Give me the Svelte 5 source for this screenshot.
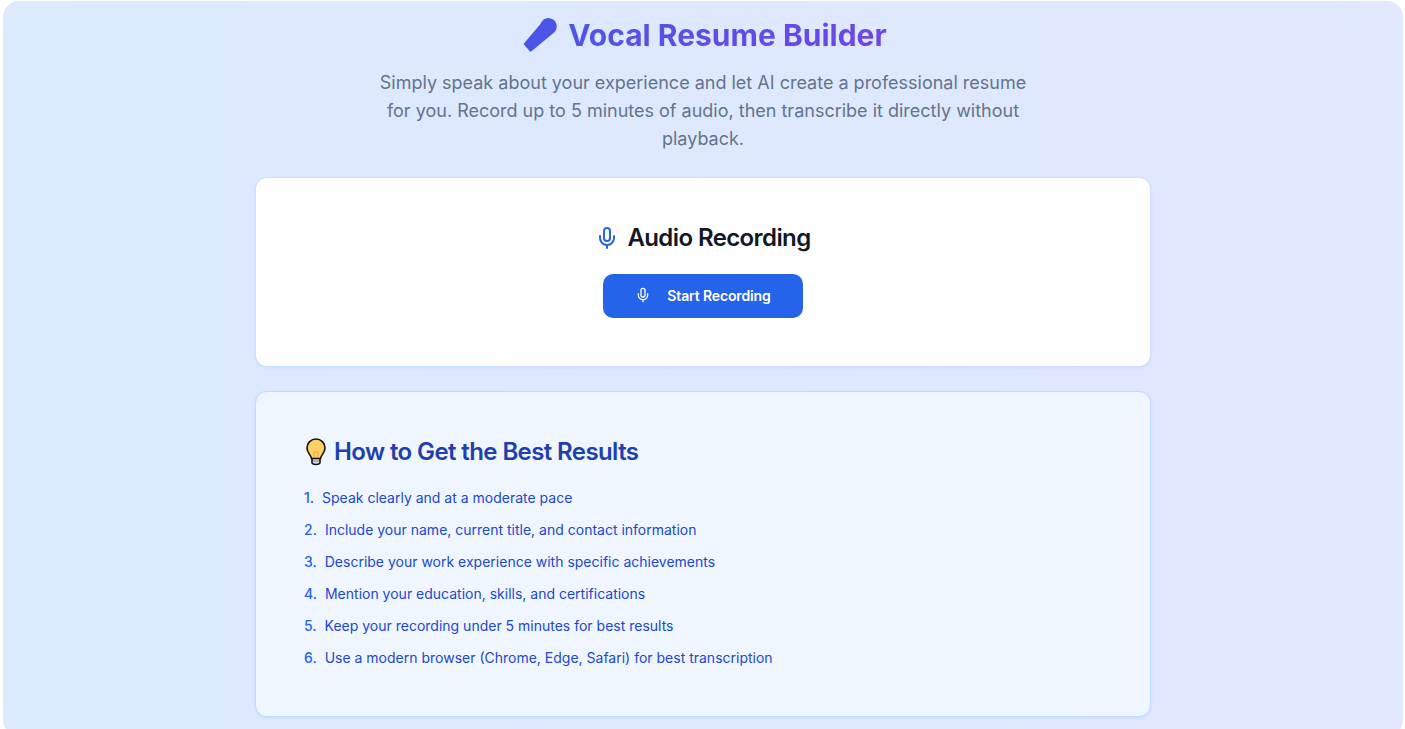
<script lang="ts">
    const tips = [
        "Speak clearly and at a moderate pace",
        "Include your name, current title, and contact information",
        "Describe your work experience with specific achievements",
        "Mention your education, skills, and certifications",
        "Keep your recording under 5 minutes for best results",
        "Use a modern browser (Chrome, Edge, Safari) for best transcription",
    ];
</script>

<div class="page">
    <main class="panel">
        <header class="header">
            <h1>
                <svg class="logo" width="38" height="38" viewBox="0 0 38 38" aria-hidden="true">
                    <path
                        fill="#4b55e8"
                        d="M4.500 28 L21.500 8 A8.300 8.300 0 1 1 34.500 17 L11.500 36 Z"
                    />
                </svg>
                <span class="title">Vocal Resume Builder</span>
            </h1>
            <p>
                Simply speak about your experience and let AI create a professional resume for you. Record up to 5
                minutes of audio, then transcribe it directly without playback.
            </p>
        </header>

        <section class="card recorder">
            <h2>
                <svg class="mic blue" width="24" height="24" viewBox="0 0 24 24" aria-hidden="true">
                    <path d="M12 2a3 3 0 0 0-3 3v7a3 3 0 0 0 6 0V5a3 3 0 0 0-3-3Z" />
                    <path d="M19 10v2a7 7 0 0 1-14 0v-2" />
                    <line x1="12" x2="12" y1="19" y2="22" />
                </svg>
                Audio Recording
            </h2>
            <button type="button">
                <svg class="mic" width="16" height="16" viewBox="0 0 24 24" aria-hidden="true">
                    <path d="M12 2a3 3 0 0 0-3 3v7a3 3 0 0 0 6 0V5a3 3 0 0 0-3-3Z" />
                    <path d="M19 10v2a7 7 0 0 1-14 0v-2" />
                    <line x1="12" x2="12" y1="19" y2="22" />
                </svg>
                Start Recording
            </button>
        </section>

        <section class="card tips">
            <h3>
                <svg class="bulb" width="24" height="28" viewBox="0 0 24 28" aria-hidden="true">
                    <path
                        d="M12 1 C7 1 3 5 3 10 C3 14 5.800 16 7.200 19.500 L7.700 21 L16.300 21 L16.800 19.500 C18.200 16 21 14 21 10 C21 5 17 1 12 1 Z"
                        fill="#fdd067"
                        stroke="#111"
                        stroke-width="1.600"
                    />
                    <path d="M9.500 14 L10.500 20.500 M14.500 14 L13.500 20.500 M9.500 14 L14.500 14" fill="none" stroke="#f4a93c" stroke-width="1" />
                    <path d="M8 20.500 L16 20.500 L16 25 C15 27 9 27 8 25 Z" fill="#d8d8d8" stroke="#111" stroke-width="1.600" />
                    <path d="M9 23 L15 23" fill="none" stroke="#8a8a8a" stroke-width="1" />
                </svg>
                How to Get the Best Results
            </h3>
            <ol>
                {#each tips as tip}
                    <li>{tip}</li>
                {/each}
            </ol>
        </section>
    </main>
</div>

<style>
    :global(body) {
        background: #ffffff;
        font-family: Inter, "Noto Sans", sans-serif;
    }

    .page {
        height: 729px;
        padding: 1px 2px 0 3px;
        box-sizing: border-box;
        overflow: hidden;
    }

    .panel {
        height: 735px;
        box-sizing: border-box;
        border-radius: 16px;
        background: linear-gradient(90deg, #dbeafe, #e0e7ff);
        padding-top: 16px;
        display: flex;
        flex-direction: column;
        align-items: center;
    }

    .header {
        text-align: center;
        margin-bottom: 24px;
    }

    h1 {
        margin: 0 0 16px;
        display: flex;
        align-items: center;
        justify-content: center;
        gap: 11px;
        font-size: 30px;
        line-height: 36px;
        font-weight: 700;
    }

    .logo {
        flex: none;
        margin-block: -1px;
    }

    .title {
        background: linear-gradient(90deg, #4f54e8, #6f46e6);
        background-clip: text;
        -webkit-background-clip: text;
        color: transparent;
    }

    .header p {
        margin: 0 auto;
        width: 672px;
        font-size: 18px;
        line-height: 28px;
        color: #64748b;
    }

    .card {
        width: 896px;
        box-sizing: border-box;
        border-radius: 12px;
        flex: none;
    }

    .recorder {
        background: #ffffff;
        background-clip: padding-box;
        border: 1px solid rgba(191, 219, 254, 0.25);
        box-shadow: 0 1px 3px rgba(59, 130, 246, 0.1);
        padding: 48px;
        margin-bottom: 24px;
        display: flex;
        flex-direction: column;
        align-items: center;
        gap: 24px;
    }

    h2 {
        margin: 0;
        display: flex;
        align-items: center;
        gap: 8px;
        font-size: 24px;
        line-height: 24px;
        font-weight: 600;
        letter-spacing: -0.6px;
        color: #111827;
    }

    .mic {
        fill: none;
        stroke: currentColor;
        stroke-width: 2;
        stroke-linecap: round;
        stroke-linejoin: round;
    }

    .blue {
        color: #2563eb;
    }

    button {
        width: 200px;
        height: 44px;
        padding: 0 0 2px;
        display: flex;
        align-items: center;
        justify-content: center;
        gap: 16px;
        border: none;
        border-radius: 10px;
        background: #2563eb;
        color: #ffffff;
        font-family: inherit;
        font-size: 14px;
        font-weight: 600;
        letter-spacing: -0.13px;
        cursor: pointer;
    }

    .tips {
        background: #eff6ff;
        border: 1px solid #bfdbfe;
        box-shadow: 0 1px 3px rgba(59, 130, 246, 0.14);
        padding: 48px;
    }

    h3 {
        margin: 0 0 24px;
        display: flex;
        align-items: center;
        gap: 6px;
        font-size: 24px;
        line-height: 24px;
        font-weight: 600;
        letter-spacing: -0.6px;
        color: #1e40af;
    }

    .bulb {
        flex: none;
        margin-block: -2px;
    }

    ol {
        margin: 0;
        padding: 0;
        list-style: none;
        display: flex;
        flex-direction: column;
        gap: 12px;
        font-size: 14px;
        line-height: 20px;
        color: #2148cf;
    }

    li::before {
        content: counter(list-item) ".";
        margin-right: 8px;
        font-weight: 500;
        color: #2563eb;
    }
</style>
